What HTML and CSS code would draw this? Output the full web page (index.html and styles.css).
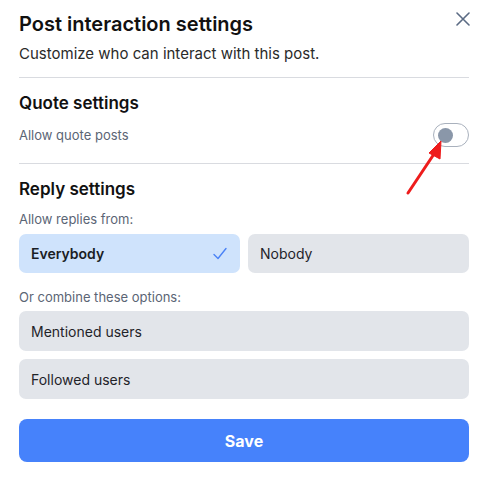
FILE: index.html
```html
<!DOCTYPE html>
<html lang="en">
<head>
<meta charset="utf-8">
<title>Post interaction settings</title>
<link rel="stylesheet" href="styles.css">
</head>
<body>
<div class="dialog">
  <header class="head">
    <h1 class="title">Post interaction settings</h1>
    <button class="close" aria-label="Close">
      <svg width="14" height="14" viewBox="0 0 14 14"><path d="M1 1L13 13M13 1L1 13" stroke="#5b6b84" stroke-width="1.6" stroke-linecap="round" fill="none"/></svg>
    </button>
  </header>
  <p class="subtitle">Customize who can interact with this post.</p>
  <div class="divider"></div>

  <section class="quote">
    <h2 class="section-title">Quote settings</h2>
    <div class="row">
      <span class="label">Allow quote posts</span>
      <span class="toggle"><span class="knob"></span></span>
    </div>
  </section>
  <div class="divider second"></div>

  <section class="reply">
    <h2 class="section-title">Reply settings</h2>
    <div class="label sub">Allow replies from:</div>
    <div class="choice-grid">
      <button class="option selected">Everybody
        <svg class="check" width="14" height="13" viewBox="0 0 14 13"><path d="M1 7.5L5 11.5L13 1.5" stroke="#4a82f6" stroke-width="1.4" fill="none" stroke-linecap="round" stroke-linejoin="round"/></svg>
      </button>
      <button class="option">Nobody</button>
    </div>
    <div class="label sub combine">Or combine these options:</div>
    <div class="option-list">
      <button class="option">Mentioned users</button>
      <button class="option">Followed users</button>
    </div>
    <button class="save">Save</button>
  </section>

  <svg class="arrow" width="60" height="70" viewBox="0 0 60 70">
    <path d="M10 62L38 20" stroke="#ee1c1c" stroke-width="3" stroke-linecap="round"/>
    <path d="M43 10L31 22L42 28Z" fill="#ee1c1c" stroke="#ee1c1c" stroke-width="1" stroke-linejoin="round"/>
  </svg>
</div>
</body>
</html>
```
FILE: styles.css
```css
* { box-sizing: border-box; }
html, body { margin: 0; padding: 0; background: #fff; }
body { font-family: Inter, "Noto Sans", sans-serif; color: #111827; }

.dialog {
  position: relative;
  width: 488px;
  padding: 11px 19px 0 19px;
}

.head {
  display: flex;
  justify-content: space-between;
  align-items: flex-start;
}
.title {
  margin: 0;
  font-size: 20px;
  line-height: 26px;
  font-weight: 600;
  color: #111;
}
.close {
  border: 0;
  background: none;
  padding: 0;
  margin: 0 -2px 0 0;
  width: 16px;
  height: 16px;
  display: flex;
  align-items: center;
  justify-content: center;
}

.subtitle {
  margin: 7px 0 0 0;
  font-size: 15px;
  line-height: 20px;
  color: #2a2a2a;
}

.divider {
  height: 1px;
  background: #d9dbe0;
  margin-top: 13px;
}
.divider.second { margin-top: 16px; }

.section-title {
  margin: 13px 0 0 0;
  font-size: 17px;
  line-height: 24px;
  font-weight: 600;
  color: #111;
}

.row {
  margin-top: 8px;
  display: flex;
  justify-content: space-between;
  align-items: center;
  height: 24px;
}
.label {
  font-size: 13px;
  line-height: 18px;
  color: #5b6575;
}
.label.sub { margin-top: 9px; }
.label.combine { margin-top: 15px; }

.toggle {
  width: 36px;
  height: 24px;
  border: 1px solid #a9b1bd;
  border-radius: 12px;
  display: flex;
  align-items: center;
  padding-left: 4px;
}
.knob {
  width: 15px;
  height: 15px;
  border-radius: 50%;
  background: #8a97a9;
}

.choice-grid {
  margin-top: 6px;
  display: grid;
  grid-template-columns: 1fr 1fr;
  gap: 8px;
}
.option {
  display: flex;
  align-items: center;
  justify-content: space-between;
  width: 100%;
  height: 40px;
  border: 0;
  border-radius: 7px;
  background: #e2e5ea;
  padding: 0 12px;
  font-family: inherit;
  font-size: 14px;
  color: #1f2329;
  text-align: left;
}
.choice-grid .option { height: 39px; }
.option.selected {
  background: #cfe3fc;
  font-weight: 600;
  color: #1a1d24;
  padding-right: 13px;
}
.option-list {
  margin-top: 5px;
  display: flex;
  flex-direction: column;
  gap: 8px;
}

.save {
  display: block;
  width: 100%;
  height: 43px;
  margin-top: 20px;
  border: 0;
  border-radius: 8px;
  background: #4682fb;
  color: #fff;
  font-family: inherit;
  font-size: 16px;
  font-weight: 700;
}

.arrow {
  position: absolute;
  left: 398px;
  top: 131px;
}
```
